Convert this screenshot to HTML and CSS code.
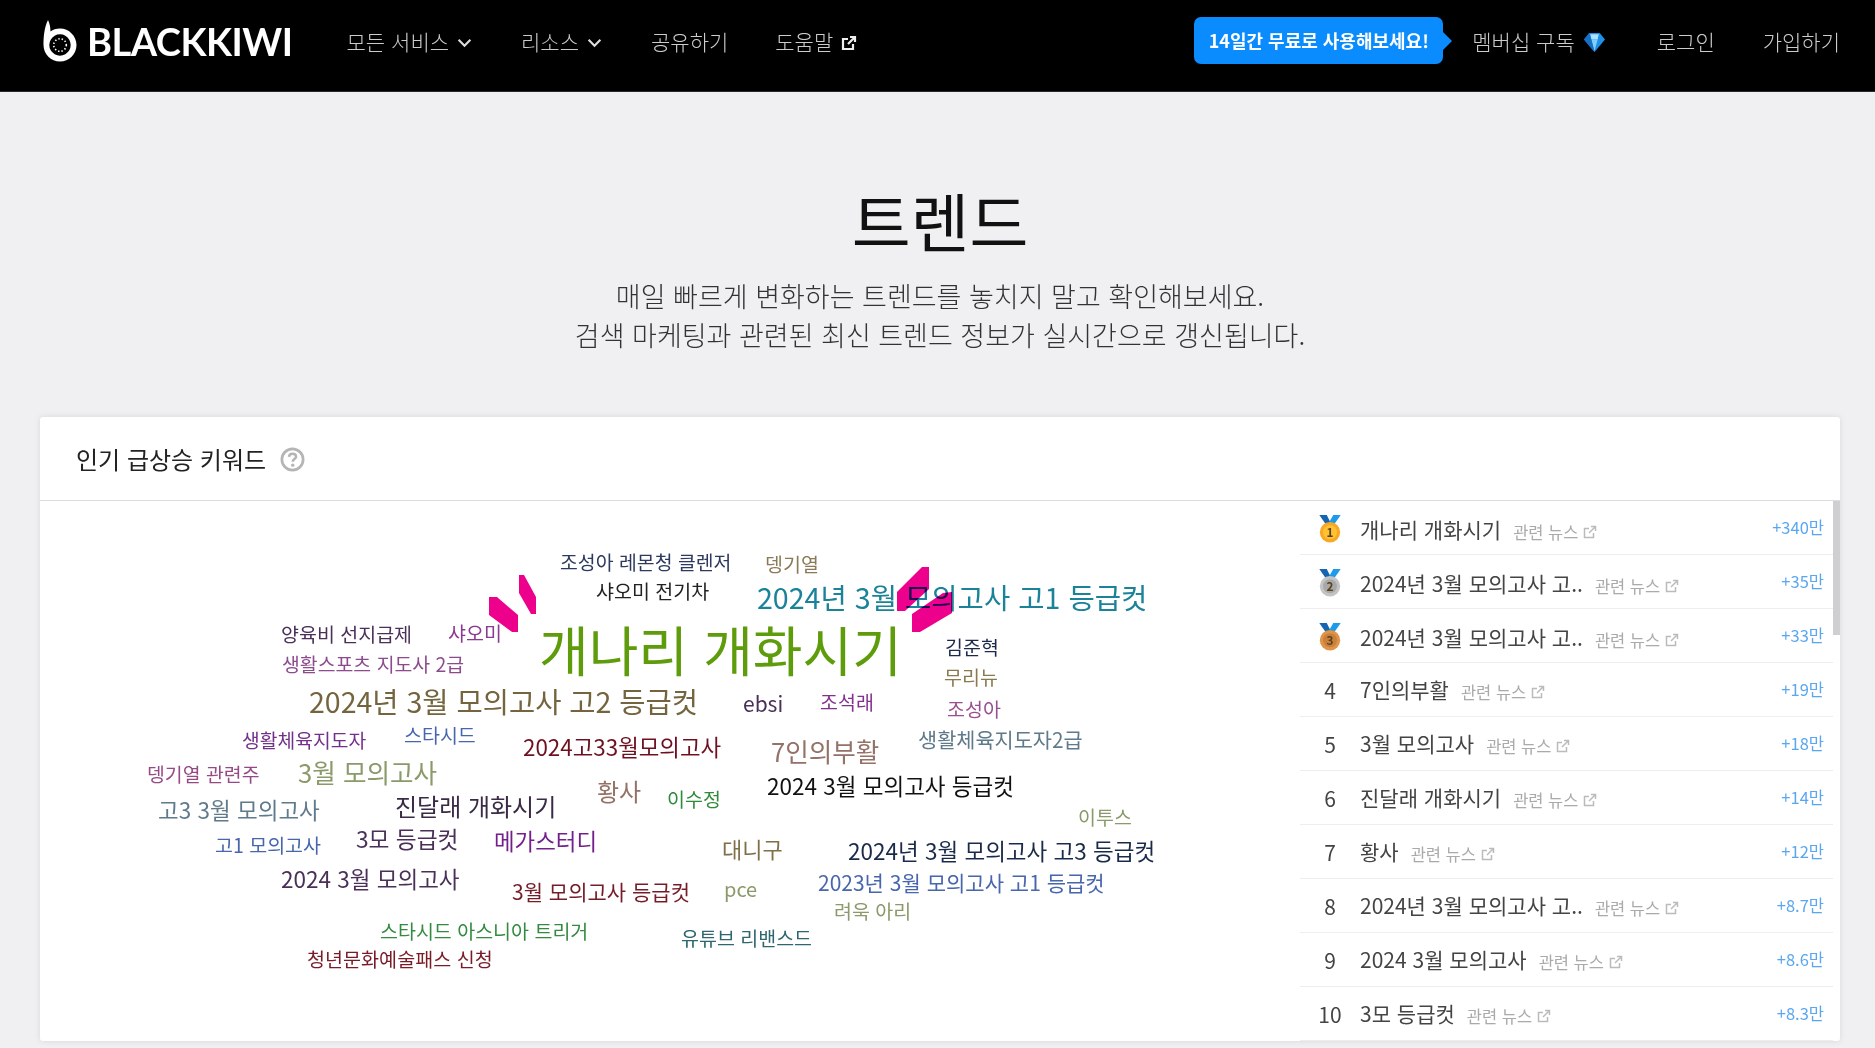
FILE: index.html
```html
<!DOCTYPE html>
<html lang="ko">
<head>
    <meta charset="UTF-8">
    <title>트렌드 - BLACKKIWI</title>
    <link rel="stylesheet" href="styles.css">
</head>
<body>

<!-- Header -->
<header class="topbar">
    <a class="logo">
        <svg class="logo-mark" viewBox="0 0 34 42" width="34" height="42">
            <path d="M5 0 C1 8 0.5 18 0.5 25 C0.5 34 8 41.5 17 41.5 C26 41.5 33.5 34 33.5 25 C33.5 16 26 8.5 17 8.5 C13 8.5 10 9.5 7.5 11.5 C7.5 7 6.5 3 5 0 Z M17 14.3 A10.7 10.7 0 1 1 16.99 14.3 Z" fill="#fff" fill-rule="evenodd"/>
            <circle cx="17" cy="25" r="6.3" fill="none" stroke="#fff" stroke-width="1.6" stroke-dasharray="1.4 2"/>
        </svg>
        <span class="logo-text">BLACKKIWI</span>
    </a>
    <nav class="nav">
        <a class="nav-item">모든 서비스
            <svg class="chevron" viewBox="0 0 14 9" width="15" height="10"><path d="M1.5 1.5 L7 7 L12.5 1.5" fill="none" stroke="#ddd" stroke-width="2"/></svg>
        </a>
        <a class="nav-item">리소스
            <svg class="chevron" viewBox="0 0 14 9" width="15" height="10"><path d="M1.5 1.5 L7 7 L12.5 1.5" fill="none" stroke="#ddd" stroke-width="2"/></svg>
        </a>
        <a class="nav-item nav-share">공유하기</a>
        <a class="nav-item">도움말
            <svg class="nav-ext" viewBox="0 0 16 16" width="16" height="16"><path d="M12 9 V14 H2 V4 H7 M9 2 H14 V7 M14 2 L7 9" fill="none" stroke="#eee" stroke-width="2.2"/></svg>
        </a>
    </nav>
    <div class="nav-right">
        <a class="trial">14일간 무료로 사용해보세요!</a>
        <a class="nav-item member">멤버십 구독
            <svg class="gem" viewBox="0 0 20 20" width="21" height="21">
                <polygon points="5,2 15,2 20,8 10,20 0,8" fill="#1f8fe8"/>
                <polygon points="6,3 14,3 13,8 7,8" fill="#a8e4ff"/>
                <polygon points="7,8 13,8 10,19" fill="#7fd0ff"/>
                <polygon points="0,8 5,2 7,8 10,20" fill="#1670c8"/>
            </svg>
        </a>
        <a class="nav-item">로그인</a>
        <a class="nav-item">가입하기</a>
    </div>
</header>

<main class="page">
    <section class="hero">
        <h1>트렌드</h1>
        <p>매일 빠르게 변화하는 트렌드를 놓치지 말고 확인해보세요.<br>검색 마케팅과 관련된 최신 트렌드 정보가 실시간으로 갱신됩니다.</p>
    </section>

    <section class="card">
        <div class="card-head">
            <h2>인기 급상승 키워드</h2>
            <svg class="help" viewBox="0 0 24 24" width="25" height="25">
                <circle cx="12" cy="12" r="10.2" fill="none" stroke="#b5b5b5" stroke-width="2.6"/>
                <path d="M8.6 9.4 C8.8 7.4 10.2 6.4 12 6.4 C14 6.4 15.4 7.6 15.4 9.3 C15.4 11.6 12.2 11.6 12.2 14.2" fill="none" stroke="#b5b5b5" stroke-width="2.4"/>
                <circle cx="12.2" cy="17.4" r="1.6" fill="#b5b5b5"/>
            </svg>
        </div>
        <div class="card-body">
            <!-- Word cloud -->
            <div class="cloud">
                <span class="word" style="left:520px;top:51px;font-size:19.4px;color:#2d3a5e">조성아 레몬청 클렌저</span>
                <span class="word" style="left:725px;top:53px;font-size:19.5px;color:#8a7a55">뎅기열</span>
                <span class="word" style="left:556px;top:80px;font-size:19.5px;color:#222">샤오미 전기차</span>
                <span class="word" style="left:717px;top:82px;font-size:28.6px;color:#1a8299">2024년 3월 모의고사 고1 등급컷</span>
                <span class="word" style="left:499px;top:121px;font-size:54px;color:#5f9c0b">개나리 개화시기</span>
                <span class="word" style="left:241px;top:123px;font-size:19.5px;color:#4a3058">양육비 선지급제</span>
                <span class="word" style="left:408px;top:122px;font-size:19.5px;color:#8a3a8f">샤오미</span>
                <span class="word" style="left:242px;top:153px;font-size:19.4px;color:#8d4a8d">생활스포츠 지도사 2급</span>
                <span class="word" style="left:905px;top:136px;font-size:19.5px;color:#1d2a4d">김준혁</span>
                <span class="word" style="left:904px;top:166px;font-size:19.5px;color:#8a7a50">무리뉴</span>
                <span class="word" style="left:269px;top:186px;font-size:28.5px;color:#74653f">2024년 3월 모의고사 고2 등급컷</span>
                <span class="word" style="left:703px;top:192px;font-size:21px;color:#4a3058">ebsi</span>
                <span class="word" style="left:780px;top:191px;font-size:19.5px;color:#84308f">조석래</span>
                <span class="word" style="left:907px;top:198px;font-size:19.5px;color:#9a4f90">조성아</span>
                <span class="word" style="left:202px;top:230px;font-size:19.3px;color:#73308a">생활체육지도자</span>
                <span class="word" style="left:364px;top:224px;font-size:19.5px;color:#4766ad">스타시드</span>
                <span class="word" style="left:483px;top:234px;font-size:22.4px;color:#6e1020">2024고33월모의고사</span>
                <span class="word" style="left:731px;top:237px;font-size:25.6px;color:#957268">7인의부활</span>
                <span class="word" style="left:878px;top:228px;font-size:20.8px;color:#5f7a8a">생활체육지도자2급</span>
                <span class="word" style="left:107px;top:263px;font-size:19.4px;color:#954a85">뎅기열 관련주</span>
                <span class="word" style="left:258px;top:258px;font-size:25.6px;color:#8b9a6a">3월 모의고사</span>
                <span class="word" style="left:118px;top:297px;font-size:22.5px;color:#5f7a8a">고3 3월 모의고사</span>
                <span class="word" style="left:355px;top:293px;font-size:24px;color:#3a2a45">진달래 개화시기</span>
                <span class="word" style="left:557px;top:278px;font-size:24px;color:#957268">황사</span>
                <span class="word" style="left:627px;top:288px;font-size:19.5px;color:#2f8a3a">이수정</span>
                <span class="word" style="left:727px;top:273px;font-size:22.5px;color:#111">2024 3월 모의고사 등급컷</span>
                <span class="word" style="left:1038px;top:306px;font-size:19.5px;color:#8b9a6a">이투스</span>
                <span class="word" style="left:175px;top:334px;font-size:19.5px;color:#4766ad">고1 모의고사</span>
                <span class="word" style="left:316px;top:327px;font-size:22.7px;color:#4a3058">3모 등급컷</span>
                <span class="word" style="left:454px;top:328px;font-size:22.4px;color:#73208a">메가스터디</span>
                <span class="word" style="left:682px;top:336px;font-size:22px;color:#7f7048">대니구</span>
                <span class="word" style="left:808px;top:338px;font-size:22.5px;color:#1a2a4a">2024년 3월 모의고사 고3 등급컷</span>
                <span class="word" style="left:241px;top:366px;font-size:22.5px;color:#4a3058">2024 3월 모의고사</span>
                <span class="word" style="left:472px;top:380px;font-size:21px;color:#741c28">3월 모의고사 등급컷</span>
                <span class="word" style="left:684px;top:378px;font-size:20px;color:#8b9a6a">pce</span>
                <span class="word" style="left:778px;top:371px;font-size:21px;color:#4766ad">2023년 3월 모의고사 고1 등급컷</span>
                <span class="word" style="left:794px;top:400px;font-size:19.5px;color:#8b9a6a">려욱 아리</span>
                <span class="word" style="left:340px;top:420px;font-size:19.5px;color:#348a40">스타시드 아스니아 트리거</span>
                <span class="word" style="left:267px;top:448px;font-size:19.6px;color:#7a1c28">청년문화예술패스 신청</span>
                <span class="word" style="left:641px;top:427px;font-size:19.5px;color:#2f6670">유튜브 리밴스드</span>
                <svg class="marks" viewBox="0 0 1260 540">
                    <g fill="#ec008c">
                        <polygon points="449,96 457,96 478,114 478,131 472,131 449,114"/>
                        <polygon points="479,74 484,74 496,96 496,113 491,113 479,92"/>
                        <polygon points="857,91 882,66 889,66 889,88 865,110 857,110"/>
                        <polygon points="872,113 903,92 912,91 912,112 880,131 872,131"/>
                    </g>
                </svg>
            </div>

            <!-- Keyword ranking -->
            <div class="rank-wrap">
                <ul class="rank-list">
                    <li class="rank-row medal-row">
                        <span class="rank">
                            <svg viewBox="0 0 24 28" width="26" height="30">
                                <path d="M2 1 H9 L13 9 L9 11 Z" fill="#1565b0"/><path d="M22 1 H15 L10 10 L15 11 Z" fill="#1e9be8"/>
                                <circle cx="12" cy="17" r="9.5" fill="#f9a825"/><circle cx="12" cy="17" r="6.5" fill="#ffc233"/>
                                <text x="12" y="21" class="medal-num">1</text>
                            </svg>
                        </span>
                        <span class="kw">개나리 개화시기</span>
                        <a class="news">관련 뉴스 <svg viewBox="0 0 14 14" width="14" height="14"><path d="M10.5 8 V12.5 H1.5 V3.5 H6 M8 1.5 H12.5 V6 M12.5 1.5 L6 8" fill="none" stroke="#bbb" stroke-width="1.5"/></svg></a>
                        <span class="gain">+340만</span>
                    </li>
                    <li class="rank-row medal-row">
                        <span class="rank">
                            <svg viewBox="0 0 24 28" width="26" height="30">
                                <path d="M2 1 H9 L13 9 L9 11 Z" fill="#1565b0"/><path d="M22 1 H15 L10 10 L15 11 Z" fill="#1e9be8"/>
                                <circle cx="12" cy="17" r="9.5" fill="#c4c4c4"/><circle cx="12" cy="17" r="6.5" fill="#a8a8a8"/>
                                <text x="12" y="21" class="medal-num">2</text>
                            </svg>
                        </span>
                        <span class="kw">2024년 3월 모의고사 고..</span>
                        <a class="news">관련 뉴스 <svg viewBox="0 0 14 14" width="14" height="14"><path d="M10.5 8 V12.5 H1.5 V3.5 H6 M8 1.5 H12.5 V6 M12.5 1.5 L6 8" fill="none" stroke="#bbb" stroke-width="1.5"/></svg></a>
                        <span class="gain">+35만</span>
                    </li>
                    <li class="rank-row medal-row">
                        <span class="rank">
                            <svg viewBox="0 0 24 28" width="26" height="30">
                                <path d="M2 1 H9 L13 9 L9 11 Z" fill="#1565b0"/><path d="M22 1 H15 L10 10 L15 11 Z" fill="#1e9be8"/>
                                <circle cx="12" cy="17" r="9.5" fill="#e09448"/><circle cx="12" cy="17" r="6.5" fill="#c9803a"/>
                                <text x="12" y="21" class="medal-num">3</text>
                            </svg>
                        </span>
                        <span class="kw">2024년 3월 모의고사 고..</span>
                        <a class="news">관련 뉴스 <svg viewBox="0 0 14 14" width="14" height="14"><path d="M10.5 8 V12.5 H1.5 V3.5 H6 M8 1.5 H12.5 V6 M12.5 1.5 L6 8" fill="none" stroke="#bbb" stroke-width="1.5"/></svg></a>
                        <span class="gain">+33만</span>
                    </li>
                    <li class="rank-row">
                        <span class="rank">4</span>
                        <span class="kw">7인의부활</span>
                        <a class="news">관련 뉴스 <svg viewBox="0 0 14 14" width="14" height="14"><path d="M10.5 8 V12.5 H1.5 V3.5 H6 M8 1.5 H12.5 V6 M12.5 1.5 L6 8" fill="none" stroke="#bbb" stroke-width="1.5"/></svg></a>
                        <span class="gain">+19만</span>
                    </li>
                    <li class="rank-row">
                        <span class="rank">5</span>
                        <span class="kw">3월 모의고사</span>
                        <a class="news">관련 뉴스 <svg viewBox="0 0 14 14" width="14" height="14"><path d="M10.5 8 V12.5 H1.5 V3.5 H6 M8 1.5 H12.5 V6 M12.5 1.5 L6 8" fill="none" stroke="#bbb" stroke-width="1.5"/></svg></a>
                        <span class="gain">+18만</span>
                    </li>
                    <li class="rank-row">
                        <span class="rank">6</span>
                        <span class="kw">진달래 개화시기</span>
                        <a class="news">관련 뉴스 <svg viewBox="0 0 14 14" width="14" height="14"><path d="M10.5 8 V12.5 H1.5 V3.5 H6 M8 1.5 H12.5 V6 M12.5 1.5 L6 8" fill="none" stroke="#bbb" stroke-width="1.5"/></svg></a>
                        <span class="gain">+14만</span>
                    </li>
                    <li class="rank-row">
                        <span class="rank">7</span>
                        <span class="kw">황사</span>
                        <a class="news">관련 뉴스 <svg viewBox="0 0 14 14" width="14" height="14"><path d="M10.5 8 V12.5 H1.5 V3.5 H6 M8 1.5 H12.5 V6 M12.5 1.5 L6 8" fill="none" stroke="#bbb" stroke-width="1.5"/></svg></a>
                        <span class="gain">+12만</span>
                    </li>
                    <li class="rank-row">
                        <span class="rank">8</span>
                        <span class="kw">2024년 3월 모의고사 고..</span>
                        <a class="news">관련 뉴스 <svg viewBox="0 0 14 14" width="14" height="14"><path d="M10.5 8 V12.5 H1.5 V3.5 H6 M8 1.5 H12.5 V6 M12.5 1.5 L6 8" fill="none" stroke="#bbb" stroke-width="1.5"/></svg></a>
                        <span class="gain">+8.7만</span>
                    </li>
                    <li class="rank-row">
                        <span class="rank">9</span>
                        <span class="kw">2024 3월 모의고사</span>
                        <a class="news">관련 뉴스 <svg viewBox="0 0 14 14" width="14" height="14"><path d="M10.5 8 V12.5 H1.5 V3.5 H6 M8 1.5 H12.5 V6 M12.5 1.5 L6 8" fill="none" stroke="#bbb" stroke-width="1.5"/></svg></a>
                        <span class="gain">+8.6만</span>
                    </li>
                    <li class="rank-row">
                        <span class="rank">10</span>
                        <span class="kw">3모 등급컷</span>
                        <a class="news">관련 뉴스 <svg viewBox="0 0 14 14" width="14" height="14"><path d="M10.5 8 V12.5 H1.5 V3.5 H6 M8 1.5 H12.5 V6 M12.5 1.5 L6 8" fill="none" stroke="#bbb" stroke-width="1.5"/></svg></a>
                        <span class="gain">+8.3만</span>
                    </li>
                </ul>
                <div class="scroll-track"><div class="scroll-thumb"></div></div>
            </div>
        </div>
    </section>
</main>

</body>
</html>
```

FILE: styles.css
```css
html, body {
    margin: 0;
    padding: 0;
    height: 100%;
    overflow: hidden;
}
body {
    font-family: "Noto Sans CJK KR", "Noto Sans", sans-serif;
    background-color: #f0f0f2;
    color: #222;
}
h1, h2, p, ul {
    margin: 0;
    padding: 0;
}

/* Header */
.topbar {
    display: flex;
    align-items: center;
    height: 81px;
    border-bottom: 1px solid #2a2a2e;
    background-color: #000;
    padding: 0 35px 10px 43px;
    color: #ccc;
}
.logo {
    display: flex;
    align-items: center;
    gap: 10px;
    margin-right: 54px;
}
.logo-text {
    font-family: Lato, sans-serif;
    font-weight: 700;
    font-size: 38px;
    line-height: 1;
    letter-spacing: -0.5px;
    color: #fff;
}
.nav {
    display: flex;
    align-items: center;
    gap: 49px;
}
.nav-right {
    display: flex;
    align-items: center;
    gap: 48px;
    margin-left: auto;
}
.nav-item {
    display: flex;
    align-items: center;
    gap: 8px;
    font-size: 21px;
    line-height: 30px;
    font-weight: 300;
    white-space: nowrap;
}
.nav-share {
    margin-right: -2px;
}
.chevron {
    margin-top: 4px;
}
.nav-ext {
    margin-top: 4px;
}
.member {
    gap: 9px;
    margin-right: 4px;
}
.gem {
    margin-top: 2px;
}
.trial {
    position: relative;
    background-color: #0a8cff;
    color: #fff;
    font-size: 18px;
    font-weight: 700;
    line-height: 47px;
    width: 249px;
    text-align: center;
    border-radius: 7px;
    margin-right: -19px;
}
.trial::after {
    content: "";
    position: absolute;
    left: 100%;
    top: 15px;
    border-left: 9px solid #0a8cff;
    border-top: 9px solid transparent;
    border-bottom: 9px solid transparent;
}

/* Hero */
.page {
    padding: 0 35px 0 40px;
}
.hero {
    text-align: center;
    padding-top: 96px;
    margin-bottom: 63px;
}
.hero h1 {
    font-size: 64px;
    line-height: 62px;
    font-weight: 400;
    color: #111;
    margin-bottom: 26px;
}
.hero p {
    font-size: 27px;
    line-height: 39px;
    font-weight: 300;
    color: #333;
}

/* Card */
.card {
    background-color: #fff;
    box-shadow: 0 0 6px rgba(0, 0, 0, 0.1);
    border-radius: 3px;
}
.card-head {
    display: flex;
    align-items: center;
    gap: 14px;
    height: 83px;
    padding-left: 36px;
    border-bottom: 1px solid #ddd;
}
.card-head h2 {
    font-size: 24px;
    font-weight: 400;
    color: #222;
}
.help {
    margin-top: 1px;
}
.card-body {
    display: flex;
    height: 540px;
}

/* Word cloud */
.cloud {
    position: relative;
    width: 1260px;
    flex: none;
    overflow: hidden;
}
.word {
    position: absolute;
    line-height: 1;
    white-space: nowrap;
}
.marks {
    position: absolute;
    left: 0;
    top: 0;
    width: 1260px;
    height: 540px;
    mix-blend-mode: multiply;
}

/* Ranking */
.rank-wrap {
    display: flex;
    flex: 1;
    min-width: 0;
}
.rank-list {
    flex: 1;
    list-style: none;
}
.rank-row {
    display: flex;
    align-items: center;
    height: 53px;
    border-bottom: 1px solid #eee;
    padding-right: 9px;
}
.rank {
    display: flex;
    justify-content: center;
    width: 60px;
    flex: none;
    font-size: 21px;
    color: #444;
}
.medal-row .rank {
    margin-top: 2px;
}
.medal-num {
    font-size: 11px;
    font-weight: 700;
    text-anchor: middle;
    fill: #5a4020;
}
.kw {
    font-size: 21px;
    color: #444;
    margin-right: 12px;
    margin-top: -1px;
}
.medal-row .kw {
    margin-top: 2px;
}
.news {
    display: flex;
    align-items: center;
    gap: 5px;
    font-size: 16.5px;
    color: #aaa;
    margin-top: 4px;
}
.medal-row .news {
    margin-top: 8px;
}
.gain {
    margin-left: auto;
    font-size: 16.5px;
    color: #5aa7f0;
    margin-top: -2px;
}
.scroll-track {
    width: 7px;
    flex: none;
}
.scroll-thumb {
    height: 134px;
    background-color: #cfcfd2;
}
```
